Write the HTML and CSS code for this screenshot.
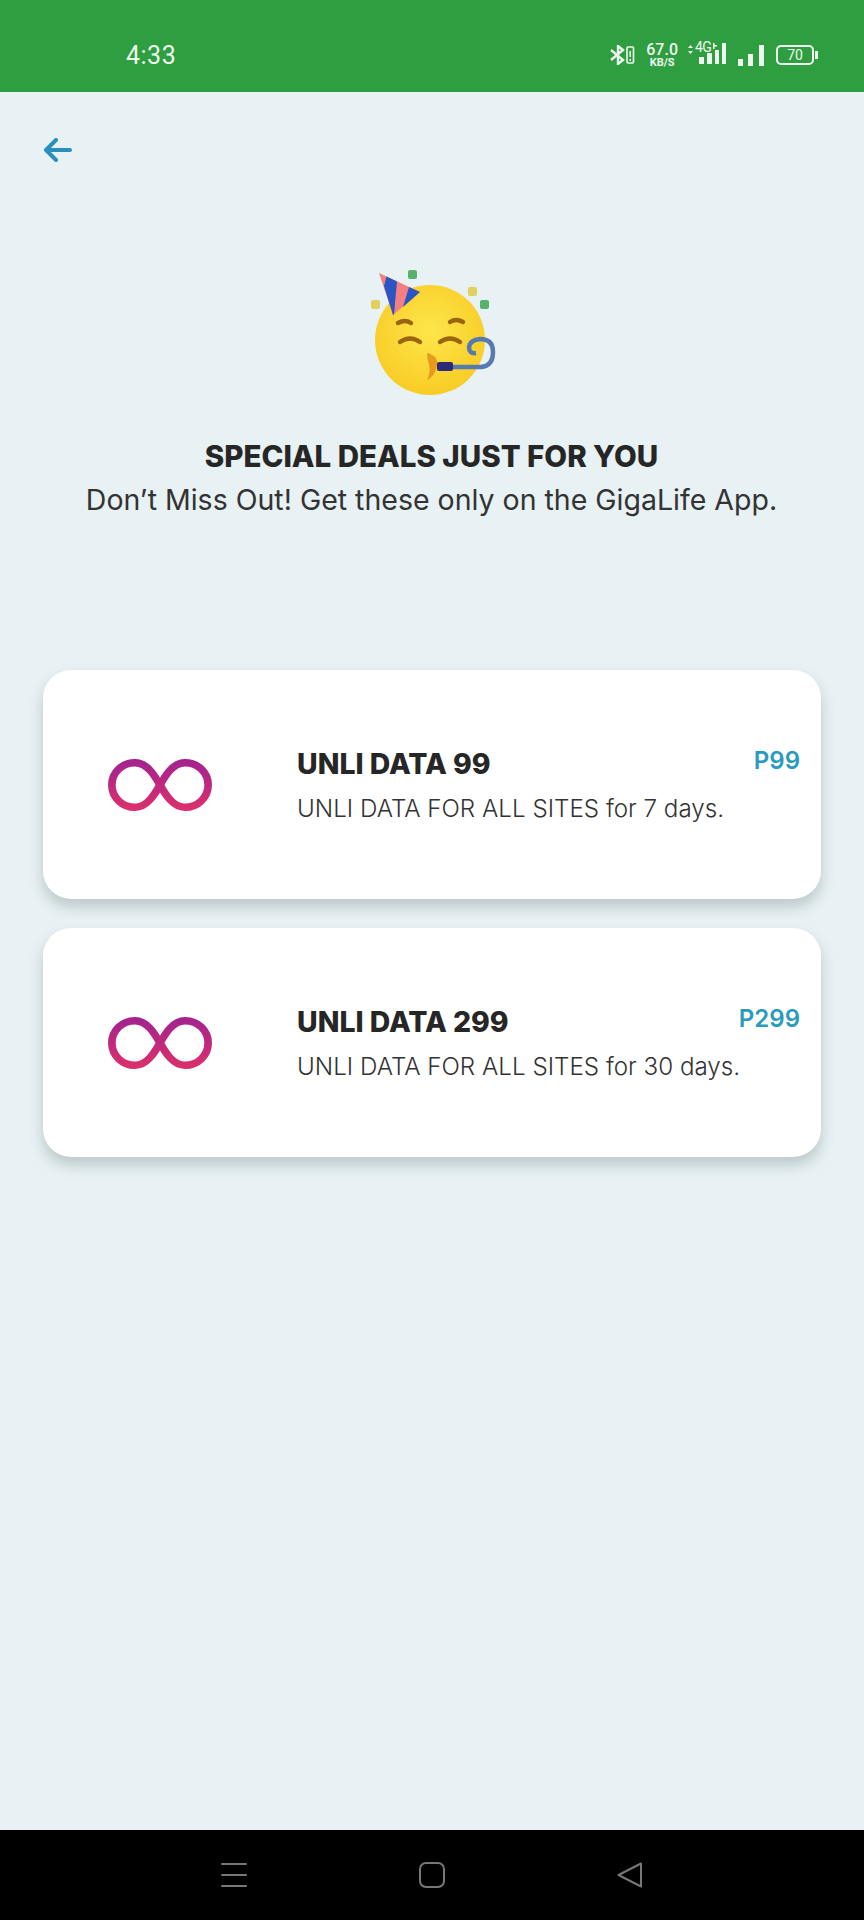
FILE: index.html
```html
<!DOCTYPE html>
<html lang="en">
<head>
    <meta charset="UTF-8">
    <title>Special Deals</title>
    <link rel="stylesheet" href="styles.css">
</head>
<body>

<div class="phone">
    <div class="status-bar">
        <span class="clock">4:33</span>
        <div class="status-icons">
            <svg class="ic-bt" width="25" height="20" viewBox="0 0 25 20" fill="none" stroke="#eef7ee" stroke-width="2.400">
                <path d="M1 5l12 10-5 4V1l5 4L1 15"/>
                <rect x="17" y="2" width="6.5" height="16" rx="1" stroke-width="1.6"/>
                <path d="M20.2 6v6M20.2 14v2" stroke-width="1.6"/>
            </svg>
            <div class="speed"><span class="speed-num">67.0</span><span class="speed-unit">KB/S</span></div>
            <div class="net">
                <span class="net-label">4G</span>
                <svg width="39" height="22" viewBox="0 0 39 22" fill="#eef7ee">
                    <path d="M1 6l2.500-3 2.500 3zM1 9l2.500 3 2.500-3z"/>
                    <path d="M26 1h1.500v2H30v1.500h-2.500V7H26z"/>
                    <rect x="12" y="15" width="5" height="7"/>
                    <rect x="20" y="11" width="5" height="11"/>
                    <rect x="28" y="8" width="4" height="14"/>
                    <rect x="35" y="1" width="4" height="21"/>
                </svg>
            </div>
            <svg width="28" height="22" viewBox="0 0 28 22" fill="#eef7ee">
                <rect x="1" y="15" width="5" height="7"/>
                <rect x="11" y="10" width="5" height="12"/>
                <rect x="22" y="1" width="5" height="21"/>
            </svg>
            <div class="battery">
                <div class="battery-body">70</div>
                <div class="battery-cap"></div>
            </div>
        </div>
    </div>

    <div class="content">
        <svg class="back" width="30" height="24" viewBox="0 0 30 24" fill="none" stroke="#2a8fbd" stroke-width="4" stroke-linecap="round" stroke-linejoin="round">
            <path d="M27 12H3M13 2L3 12l10 10"/>
        </svg>

        <svg class="party" width="180" height="160" viewBox="0 0 180 160">
            <defs>
                <radialGradient id="face" cx="50%" cy="42%" r="60%">
                    <stop offset="0" stop-color="#fde64a"/>
                    <stop offset="1" stop-color="#f8cb25"/>
                </radialGradient>
            </defs>
            <circle cx="90" cy="90" r="55" fill="url(#face)"/>
            <path d="M39 23L80 42 53 65z" fill="#f47f82"/>
            <path d="M46.500 26.500L57 31.500 54 64.500 53 65 44 36zM69 37L80 42 63 57z" fill="#2b55c4"/>
            <g fill="#58b26c">
                <rect x="68" y="20" width="9" height="9" rx="2"/>
                <rect x="140" y="50" width="9" height="9" rx="2"/>
            </g>
            <g fill="#e3cf5c">
                <rect x="128" y="37" width="9" height="9" rx="2"/>
                <rect x="31" y="50" width="9" height="9" rx="2"/>
            </g>
            <g fill="none" stroke="#9a6410" stroke-width="4.500" stroke-linecap="round">
                <path d="M58 73q7-4 13 0M110 72q6-4 13 0"/>
                <path d="M60 92q10-7 20 0M100 92q10-7 20 0"/>
            </g>
            <path d="M87 103q12 3 10 13t-10 14q4-9 2-15t-2-12z" fill="#e99a1c"/>
            <path d="M113 117h28q12-1 12-15 0-13-13-13-10 1-11 8 0 7 7 6" fill="none" stroke="#5579b0" stroke-width="4.500"/>
            <rect x="97" y="112" width="16" height="9" rx="2" fill="#2d2a78"/>
        </svg>

        <div class="heading">
            <h1>SPECIAL DEALS JUST FOR YOU</h1>
            <p>Don’t Miss Out! Get these only on the GigaLife App.</p>
        </div>

        <div class="deals">
            <div class="card">
                <div class="card-icon">
                    <svg width="104" height="52" viewBox="0 0 108 56" preserveAspectRatio="none" fill="none" stroke="url(#inf1)" stroke-width="8">
                        <defs>
                            <linearGradient id="inf1" x1="0" y1="0" x2="0" y2="1">
                                <stop offset="0" stop-color="#a5238f"/>
                                <stop offset="1" stop-color="#d92f6c"/>
                            </linearGradient>
                        </defs>
                        <path d="M54 28C49 19 41 4 28 4 14.700 4 4 14.700 4 28S14.700 52 28 52C41 52 49 37 54 28S67 4 80 4C93.300 4 104 14.700 104 28S93.300 52 80 52C67 52 59 37 54 28z"/>
                    </svg>
                </div>
                <div class="card-body">
                    <div class="card-top">
                        <span class="card-title">UNLI DATA 99</span>
                        <span class="card-price">P99</span>
                    </div>
                    <div class="card-desc">UNLI DATA FOR ALL SITES for 7 days.</div>
                </div>
            </div>
            <div class="card">
                <div class="card-icon">
                    <svg width="104" height="52" viewBox="0 0 108 56" preserveAspectRatio="none" fill="none" stroke="url(#inf1)" stroke-width="8">
                        <path d="M54 28C49 19 41 4 28 4 14.700 4 4 14.700 4 28S14.700 52 28 52C41 52 49 37 54 28S67 4 80 4C93.300 4 104 14.700 104 28S93.300 52 80 52C67 52 59 37 54 28z"/>
                    </svg>
                </div>
                <div class="card-body">
                    <div class="card-top">
                        <span class="card-title">UNLI DATA 299</span>
                        <span class="card-price">P299</span>
                    </div>
                    <div class="card-desc">UNLI DATA FOR ALL SITES for 30 days.</div>
                </div>
            </div>
        </div>
    </div>

    <div class="nav-bar">
        <svg width="26" height="26" viewBox="0 0 26 26" stroke="#777" stroke-width="2" stroke-linecap="round">
            <path d="M1 2h24M1 13h24M1 24h24"/>
        </svg>
        <svg width="26" height="26" viewBox="0 0 26 26" fill="none" stroke="#777" stroke-width="2">
            <rect x="1" y="1" width="24" height="24" rx="6"/>
        </svg>
        <svg width="26" height="26" viewBox="0 0 26 26" fill="none" stroke="#777" stroke-width="2" stroke-linejoin="round">
            <path d="M24 1.500v23L1.500 13z"/>
        </svg>
    </div>
</div>

</body>
</html>
```
FILE: styles.css
```css
* {
    box-sizing: border-box;
}
body {
    margin: 0;
    font-family: 'Inter', 'Open Sans', sans-serif;
    background: #e8f1f3;
}
.phone {
    width: 864px;
    height: 1920px;
    display: flex;
    flex-direction: column;
}
.status-bar {
    height: 92px;
    flex-shrink: 0;
    background: #2f9e41;
    color: #eef7ee;
    display: flex;
    align-items: center;
    justify-content: space-between;
    padding: 18px 46px 0 126px;
    font-family: 'Roboto', sans-serif;
}
.clock {
    font-size: 25px;
    letter-spacing: 0.5px;
}
.status-icons {
    display: flex;
    align-items: center;
    gap: 11px;
}
.speed {
    display: flex;
    flex-direction: column;
    align-items: center;
    gap: 1px;
    margin-right: -2px;
}
.speed-num {
    font-size: 16px;
    font-weight: 500;
    line-height: 13px;
}
.speed-unit {
    font-size: 11px;
    font-weight: 700;
    line-height: 11px;
}
.net {
    position: relative;
}
.net-label {
    position: absolute;
    left: 8px;
    top: -3px;
    font-size: 14px;
    letter-spacing: -0.5px;
}
.battery {
    display: flex;
    align-items: center;
    gap: 1px;
}
.battery-body {
    width: 38px;
    height: 20px;
    border: 2px solid #eef7ee;
    border-radius: 5px;
    font-size: 14px;
    line-height: 16px;
    text-align: center;
}
.battery-cap {
    width: 3px;
    height: 8px;
    background: #eef7ee;
}
.content {
    flex: 1;
    display: flex;
    flex-direction: column;
    padding: 46px 43px 0;
}
.back {
    display: block;
}
.party {
    display: block;
    align-self: center;
    margin: 88px 0 0 -4px;
}
.heading {
    text-align: center;
    margin-top: 25px;
    margin-left: -1px;
    color: #262626;
}
.heading h1 {
    margin: 0;
    font-size: 29.5px;
    font-weight: 800;
    line-height: 42px;
}
.heading p {
    margin: 3px 0 0;
    font-size: 28.5px;
    line-height: 40px;
    color: #333;
}
.deals {
    margin-top: 150px;
    display: flex;
    flex-direction: column;
    gap: 29px;
}
.card {
    height: 229px;
    background: white;
    border-radius: 28px;
    box-shadow: 0 8px 14px rgba(60,80,80,0.25);
    display: flex;
    align-items: center;
}
.card-icon {
    width: 254px;
    flex-shrink: 0;
    display: flex;
    justify-content: center;
    padding-right: 20px;
}
.card-body {
    flex: 1;
    padding-right: 21px;
}
.card-top {
    display: flex;
    justify-content: space-between;
}
.card-title {
    font-size: 28.4px;
    font-weight: 800;
    color: #262626;
}
.card-price {
    font-size: 24px;
    font-weight: 600;
    color: #2a9bbd;
}
.card-desc {
    margin-top: 13px;
    font-size: 24.2px;
    font-weight: 300;
    color: #333;
}
.nav-bar {
    height: 90px;
    flex-shrink: 0;
    background: #000;
    display: flex;
    align-items: center;
    justify-content: center;
    gap: 172px;
}
```
